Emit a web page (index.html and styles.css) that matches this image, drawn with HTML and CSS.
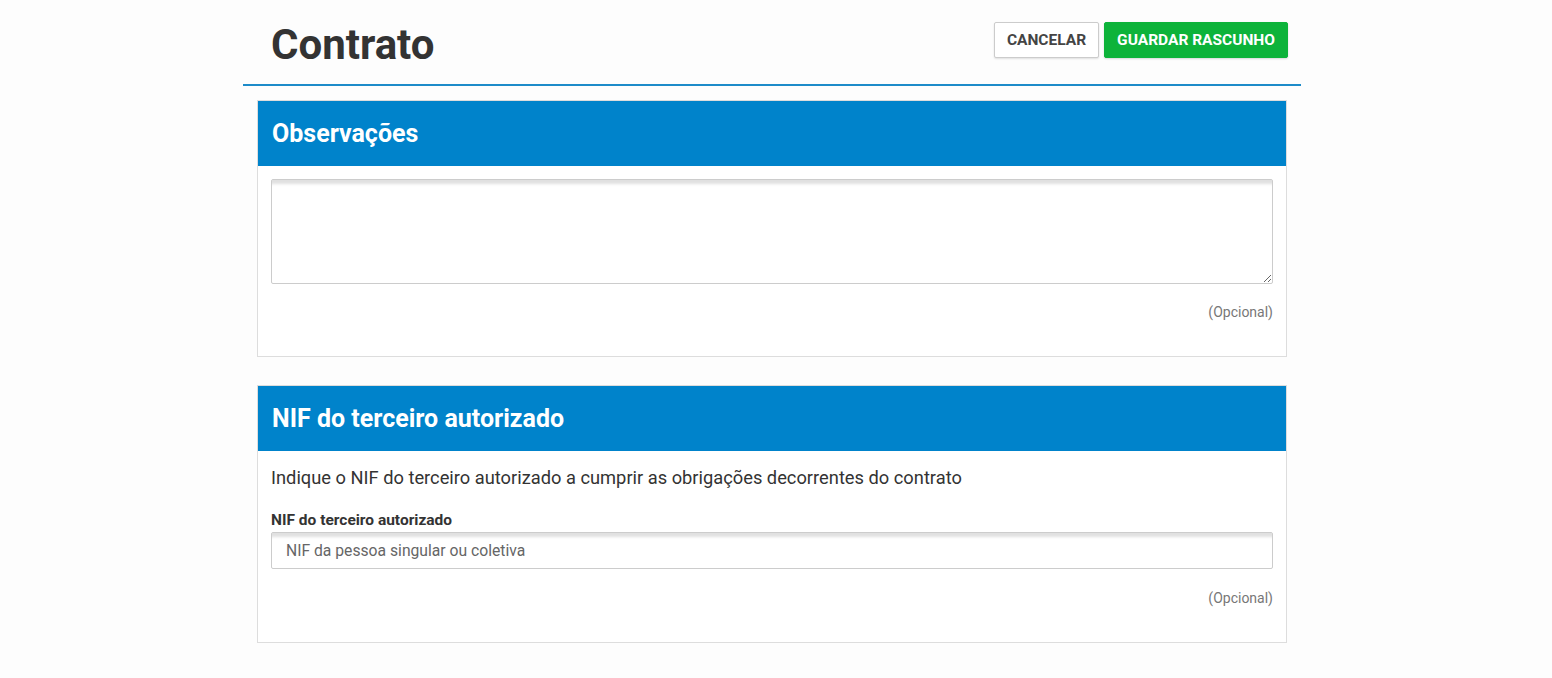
FILE: index.html
```html
<!DOCTYPE html>
<html lang="pt">
<head>
    <meta charset="UTF-8">
    <title>Contrato</title>
    <link rel="stylesheet" href="styles.css">
</head>
<body>
    <div class="page">
        <div class="page-header">
            <h1 class="page-title">Contrato</h1>
            <div class="actions">
                <button class="btn btn-cancel">Cancelar</button>
                <button class="btn btn-save">Guardar rascunho</button>
            </div>
        </div>

        <div class="card">
            <div class="card-header">Observações</div>
            <div class="card-body">
                <textarea class="textarea"></textarea>
                <div class="optional">(Opcional)</div>
            </div>
        </div>

        <div class="card">
            <div class="card-header">NIF do terceiro autorizado</div>
            <div class="card-body">
                <p class="intro">Indique o NIF do terceiro autorizado a cumprir as obrigações decorrentes do contrato</p>
                <label class="field-label">NIF do terceiro autorizado</label>
                <input class="input" type="text" placeholder="NIF da pessoa singular ou coletiva">
                <div class="optional">(Opcional)</div>
            </div>
        </div>
    </div>
</body>
</html>
```

FILE: styles.css
```css
body {
    margin: 0;
    background: #fdfdfd;
    font-family: Roboto, "Liberation Sans", sans-serif;
    color: #333;
}
.page {
    width: 1058px;
    margin-left: calc(50% - 533px);
}
.page-header {
    display: flex;
    justify-content: space-between;
    align-items: flex-start;
    height: 84px;
    padding: 0 13px 0 28px;
    border-bottom: 2px solid #1d8bc9;
}
.page-title {
    margin: 21px 0 0 0;
    font-size: 42px;
    font-weight: 700;
    color: #333;
    line-height: 48px;
}
.actions {
    display: flex;
    gap: 5px;
    margin-top: 22px;
}
.btn {
    height: 36px;
    padding: 0 12px;
    font-family: Roboto, "Liberation Sans", sans-serif;
    font-size: 15.5px;
    font-weight: 700;
    text-transform: uppercase;
    border-radius: 2px;
    cursor: pointer;
}
.btn-cancel {
    background: #fff;
    color: #444;
    border: 1px solid #ccc;
    box-shadow: 0 1px 2px rgba(0, 0, 0, 0.12);
}
.btn-save {
    background: #0db33a;
    color: #fff;
    border: 1px solid #0db33a;
    box-shadow: 0 1px 2px rgba(0, 0, 0, 0.15);
}
.card {
    margin: 14px 14px 28px 14px;
    background: #fff;
    border: 1px solid #ddd;
}
.card-header {
    background: #0083cb;
    color: #fff;
    height: 65px;
    line-height: 65px;
    padding: 0 14px;
    font-size: 25px;
    font-weight: 700;
}
.card-body {
    padding: 13px 13px 35px 13px;
}
.textarea {
    display: block;
    box-sizing: border-box;
    width: 100%;
    height: 105px;
    margin: 0;
    border: 1px solid #ccc;
    border-radius: 2px;
    box-shadow: inset 0 7px 3px -3px #e0e0e0;
    resize: vertical;
}
.optional {
    text-align: right;
    font-size: 14px;
    color: #777;
    margin-top: 19px;
    line-height: 18px;
}
.intro {
    margin: 2px 0 0 0;
    font-size: 18.3px;
    line-height: 24px;
    color: #333;
}
.field-label {
    display: block;
    margin-top: 20px;
    font-size: 15.5px;
    font-weight: 700;
    line-height: 20px;
}
.input {
    display: block;
    box-sizing: border-box;
    width: 100%;
    height: 37px;
    margin-top: 2px;
    padding: 0 14px;
    font-family: Roboto, "Liberation Sans", sans-serif;
    font-size: 15.7px;
    border: 1px solid #ccc;
    border-radius: 2px;
    box-shadow: inset 0 7px 3px -3px #e0e0e0;
}
.input::placeholder {
    color: #666;
}
.input + .optional {
    margin-top: 20px;
}
```
